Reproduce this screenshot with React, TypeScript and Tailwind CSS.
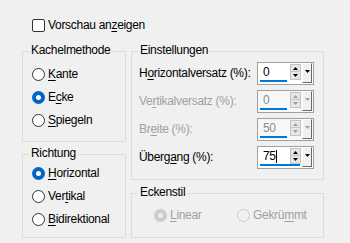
import type { ReactNode } from 'react'

function Key({ children }: { children: ReactNode }) {
  return <span className="underline underline-offset-[2px]">{children}</span>
}

function Group({ title, className, children }: { title: string; className: string; children: ReactNode }) {
  return (
    <div className={`border border-[#dcdcdc] ${className}`}>
      <div className="-mt-[9px] ml-[6px] px-[2px] w-fit bg-[#f0f0f0] leading-[15px]">{title}</div>
      {children}
    </div>
  )
}

function Radio({ checked, disabled, children }: { checked?: boolean; disabled?: boolean; children: ReactNode }) {
  let dot = 'border border-[#333333] bg-white'
  if (checked) dot = disabled ? 'bg-[#cccccc]' : 'bg-[#0067c0]'
  else if (disabled) dot = 'border border-[#cccccc] bg-[#f0f0f0]'
  return (
    <div className={`flex items-center gap-[3px] h-[23px] ${disabled ? 'text-[#a0a0a0]' : ''}`}>
      <div className={`w-[13px] h-[13px] rounded-full flex items-center justify-center ${dot}`}>
        {checked && <div className={`w-[5px] h-[5px] rounded-full ${disabled ? 'bg-[#ececec]' : 'bg-white'}`} />}
      </div>
      <span className="leading-[15px] whitespace-nowrap">{children}</span>
    </div>
  )
}

function Tri({ up, color }: { up?: boolean; color: string }) {
  return (
    <svg width="5" height="3" viewBox="0 0 5 3">
      <path d={up ? 'M2.5 0L5 3H0Z' : 'M0 0H5L2.5 3Z'} fill={color} />
    </svg>
  )
}

function Spinner({ value, disabled, bar, caret }: { value: string; disabled?: boolean; bar: number; caret?: boolean }) {
  const arrow = disabled ? '#a0a0a0' : '#000000'
  return (
    <div className={`w-[57px] h-[23px] border border-[#a0a0a0] flex shrink-0 ${disabled ? 'bg-[#f7f7f7]' : 'bg-white'}`}>
      <div className="w-[43px] flex flex-col">
        <div className="flex h-[17px]">
          <div className={`w-[31px] pl-[5px] pt-[2px] leading-[14px] flex ${disabled ? 'text-[#8c8c8c]' : ''}`}>
            {value}
            {caret && <div className="w-[1px] h-[13px] bg-black mt-[1px]" />}
          </div>
          <div className="ml-[1px] mt-[1px] w-[11px] flex flex-col">
            <div className="h-[8px] bg-[#e6e6e6] border border-[#c4c4c4] flex items-center justify-center">
              <Tri up color={arrow} />
            </div>
            <div className="h-[8px] bg-[#e6e6e6] border border-[#c4c4c4] border-t-0 flex items-center justify-center">
              <Tri color={arrow} />
            </div>
          </div>
        </div>
        <div className="ml-[2px] h-[2px] bg-[#0078d7]" style={{ width: bar }} />
      </div>
      <div className="ml-[1px] w-[10px] h-[20px] bg-[#f0f0f0] border-t border-l border-white border-r border-b border-r-[#696969] border-b-[#696969] flex justify-center pt-[6px]">
        <Tri color={arrow} />
      </div>
    </div>
  )
}

function Row({ label, disabled, children }: { label: ReactNode; disabled?: boolean; children: ReactNode }) {
  return (
    <div className={`flex items-center justify-between h-[23px] pl-[7px] pr-[9px] ${disabled ? 'text-[#a0a0a0]' : ''}`}>
      <span className="leading-[15px] whitespace-nowrap">{label}</span>
      {children}
    </div>
  )
}

export default function App() {
  return (
    <div className="w-[350px] h-[243px] bg-[#f0f0f0] text-[12px] tracking-[-0.3px] text-black pl-[22px] pt-[19px] font-['Liberation_Sans',Arial,sans-serif]">
      <div className="ml-[10px] flex items-center gap-[3px] h-[13px]">
        <div className="w-[13px] h-[13px] border border-[#333333] bg-white rounded-[2px]" />
        <span className="leading-[15px]">Vorschau an<Key>z</Key>eigen</span>
      </div>

      <div className="mt-[19px] flex gap-[5px]">
        <div className="w-[104px] flex flex-col gap-[12px]">
          <Group title="Kachelmethode" className="h-[91px]">
            <div className="mt-[5px] pl-[9px]">
              <Radio><Key>K</Key>ante</Radio>
              <Radio checked>E<Key>c</Key>ke</Radio>
              <Radio><Key>S</Key>piegeln</Radio>
            </div>
          </Group>
          <Group title="Richtung" className="h-[84px]">
            <div className="mt-[1px] pl-[9px]">
              <Radio checked><Key>H</Key>orizontal</Radio>
              <Radio>Ver<Key>t</Key>ikal</Radio>
              <Radio><Key>B</Key>idirektional</Radio>
            </div>
          </Group>
        </div>

        <div className="w-[193px] flex flex-col gap-[13px]">
          <Group title="Einstellungen" className="h-[129px]">
            <div className="mt-[4px] flex flex-col gap-[5px]">
              <Row label={<>H<Key>o</Key>rizontalversatz (%):</>}>
                <Spinner value="0" bar={27} />
              </Row>
              <Row disabled label={<>Ve<Key>r</Key>tikalversatz (%):</>}>
                <Spinner value="0" disabled bar={27} />
              </Row>
              <Row disabled label={<>Br<Key>e</Key>ite (%):</>}>
                <Spinner value="50" disabled bar={27} />
              </Row>
              <Row label={<>Überg<Key>a</Key>ng (%):</>}>
                <Spinner value="75" bar={40} caret />
              </Row>
            </div>
          </Group>
          <Group title="Eckenstil" className="h-[45px]">
            <div className="mt-[4px] pl-[22px] flex">
              <div className="w-[83px]">
                <Radio checked disabled><Key>L</Key>inear</Radio>
              </div>
              <Radio disabled>Gekrü<Key>m</Key>mt</Radio>
            </div>
          </Group>
        </div>
      </div>
    </div>
  )
}
